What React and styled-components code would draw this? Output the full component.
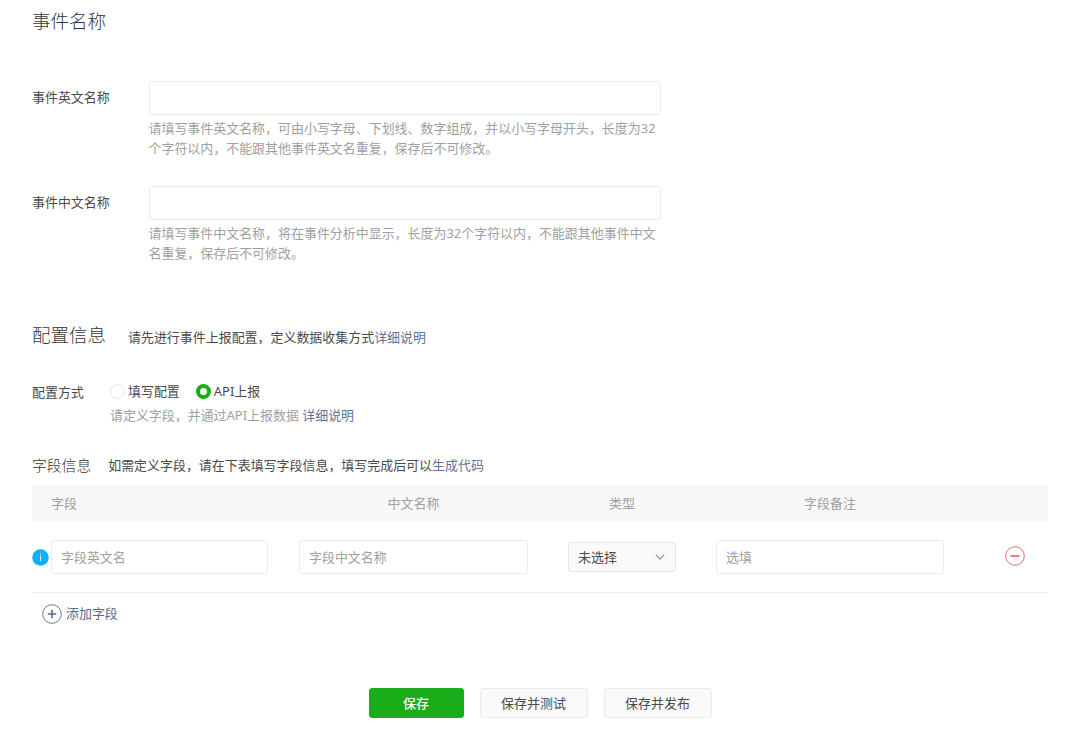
import React, { useState } from "react";
import styled, { createGlobalStyle } from "styled-components";

const App = () => {
  const [mode, setMode] = useState("api");

  return (
    <Page>
      <GlobalStyle />
      <Title>事件名称</Title>
      <Field>
        <Label>事件英文名称</Label>
        <Control>
          <Input />
          <Help>
            请填写事件英文名称，可由小写字母、下划线、数字组成，并以小写字母开头，长度为32个字符以内，不能跟其他事件英文名重复，保存后不可修改。
          </Help>
        </Control>
      </Field>
      <Field>
        <Label>事件中文名称</Label>
        <Control>
          <Input />
          <Help>
            请填写事件中文名称，将在事件分析中显示，长度为32个字符以内，不能跟其他事件中文名重复，保存后不可修改。
          </Help>
        </Control>
      </Field>

      <ConfigHeader>
        <Title>配置信息</Title>
        <Intro>
          请先进行事件上报配置，定义数据收集方式<Link>详细说明</Link>
        </Intro>
      </ConfigHeader>
      <Config>
        <ConfigLabel>配置方式</ConfigLabel>
        <div>
          <Options>
            <Option onClick={() => setMode("form")}>
              <Radio $checked={mode === "form"} />
              填写配置
            </Option>
            <Option onClick={() => setMode("api")}>
              <Radio $checked={mode === "api"} />
              API上报
            </Option>
          </Options>
          <Hint>
            请定义字段，并通过API上报数据 <Link>详细说明</Link>
          </Hint>
        </div>
      </Config>

      <FieldsHeader>
        <Subtitle>字段信息</Subtitle>
        <span>
          如需定义字段，请在下表填写字段信息，填写完成后可以<Link>生成代码</Link>
        </span>
      </FieldsHeader>
      <TableHead>
        <FirstHead>字段</FirstHead>
        <Head>中文名称</Head>
        <Head>类型</Head>
        <Head>字段备注</Head>
      </TableHead>
      <TableRow>
        <NameCell>
          <InfoIcon />
          <NameInput placeholder="字段英文名" />
        </NameCell>
        <Input placeholder="字段中文名称" />
        <Select>
          未选择
          <Chevron />
        </Select>
        <Input placeholder="选填" />
        <Remove>
          <CircleIcon />
        </Remove>
      </TableRow>
      <Add>
        <CircleIcon plus />
        添加字段
      </Add>

      <Actions>
        <Primary>保存</Primary>
        <Button>保存并测试</Button>
        <Button>保存并发布</Button>
      </Actions>
    </Page>
  );
};

const InfoIcon = () => (
  <svg width="17" height="17" viewBox="0 0 17 17">
    <circle cx="8.5" cy="8.5" r="8.3" fill="#10aeff" />
    <path d="M8.5 4.3v1.3M8.5 6.4v6" stroke="#d5f1ff" strokeWidth="1" />
  </svg>
);

const CircleIcon = ({ plus }) => (
  <svg width="20" height="20" viewBox="0 0 20 20" fill="none" stroke="currentColor">
    <circle cx="10" cy="10" r="9.3" strokeWidth="0.9" />
    <path d={plus ? "M5.8 10h8.4M10 5.8v8.4" : "M5.5 10h9"} strokeWidth="1.6" />
  </svg>
);

const Chevron = () => (
  <svg width="10" height="6" viewBox="0 0 10 6" fill="none" stroke="#a0a0a0">
    <path d="M0.8 0.8L5 5l4.2-4.2" strokeWidth="1.4" />
  </svg>
);

const GlobalStyle = createGlobalStyle`
  * {
    box-sizing: border-box;
  }
  body {
    margin: 0;
    background: #ffffff;
  }
  body,
  input,
  button {
    font-family: "Noto Sans", "Noto Sans CJK SC", sans-serif;
    font-weight: 400;
    font-size: 12.96px;
    line-height: 20.7px;
    color: #4a4a4a;
  }
`;

const Page = styled.div`
  width: 1080px;
  height: 730px;
  padding: 8px 32px 0;
  overflow: hidden;
`;

const Title = styled.h2`
  margin: 0;
  font-weight: 300;
  font-size: 18.5px;
  line-height: 26px;
  color: #353535;
`;

const Field = styled.div`
  display: flex;
  height: 78px;
  margin-bottom: 27px;
  ${Title} + & {
    margin-top: 47px;
  }
`;

const Label = styled.label`
  width: 116.5px;
  line-height: 32px;
`;

const Control = styled.div`
  width: 512px;
`;

const Input = styled.input`
  display: block;
  width: 100%;
  height: 34px;
  padding: 0 9px;
  border: 1px solid #ebebed;
  border-radius: 3px;
  background: #ffffff;
  outline: none;
  &::placeholder {
    color: #a0a0a0;
    opacity: 1;
  }
`;

const Help = styled.p`
  margin: 3px 0 0;
  line-height: 20.3px;
  color: #a0a0a0;
`;

const Link = styled.a`
  color: #5f729a;
  cursor: pointer;
`;

const ConfigHeader = styled.div`
  display: flex;
  margin-top: 58px;
`;

const Intro = styled.span`
  margin-left: 22px;
  line-height: 30px;
`;

const Config = styled.div`
  display: flex;
  margin-top: 27px;
`;

const ConfigLabel = styled.span`
  width: 78px;
  line-height: 27px;
`;

const Options = styled.div`
  display: flex;
  gap: 16px;
  height: 24px;
`;

const Option = styled.label`
  display: flex;
  align-items: center;
  gap: 3px;
  cursor: pointer;
`;

const Radio = styled.span`
  width: 15px;
  height: 15px;
  border: ${({ $checked }) => ($checked ? "4px solid #1aad19" : "1px solid #e4e4e4")};
  border-radius: 50%;
`;

const Hint = styled.div`
  line-height: 24px;
  color: #a0a0a0;
`;

const FieldsHeader = styled.div`
  display: flex;
  align-items: center;
  height: 24px;
  margin-top: 26px;
`;

const Subtitle = styled.h3`
  margin: 0 17px 0 0;
  font-weight: 300;
  font-size: 14.8px;
  color: #353535;
`;

const TableHead = styled.div`
  display: grid;
  grid-template-columns: 267px 229px 188px 228px 1fr;
  align-items: center;
  height: 37px;
  margin-top: 8px;
  background: #f6f8f9;
  color: #a0a0a0;
`;

const Head = styled.span`
  text-align: center;
`;

const FirstHead = styled.span`
  padding-left: 19px;
`;

const TableRow = styled.div`
  display: grid;
  grid-template-columns: 267px 229px 188px 228px 1fr;
  align-items: center;
  height: 71px;
  border-bottom: 1px solid #ebebed;
`;

const NameCell = styled.div`
  display: flex;
  align-items: center;
  gap: 2px;
`;

const NameInput = styled(Input)`
  width: 217px;
`;

const Select = styled.div`
  display: flex;
  align-items: center;
  justify-content: space-between;
  justify-self: center;
  width: 108px;
  height: 30px;
  padding: 0 10px 0 9px;
  border: 1px solid #e7e7eb;
  border-radius: 3px;
  background: #fafafa;
`;

const Remove = styled.div`
  display: flex;
  justify-content: flex-end;
  padding: 0 23px 2px 0;
  color: #e85a57;
`;

const Add = styled.div`
  display: flex;
  align-items: center;
  gap: 4px;
  height: 41px;
  padding-left: 10px;
  color: #576b95;
`;

const Actions = styled.div`
  display: flex;
  justify-content: center;
  gap: 16px;
  margin-top: 54px;
`;

const Button = styled.button`
  width: 108px;
  height: 30px;
  padding: 0;
  border: 1px solid #ebebed;
  border-radius: 3px;
  background: #fafafa;
`;

const Primary = styled(Button)`
  width: 95px;
  border-color: #1aad19;
  background: #1aad19;
  font-weight: 500;
  color: #ffffff;
`;

export default App;
